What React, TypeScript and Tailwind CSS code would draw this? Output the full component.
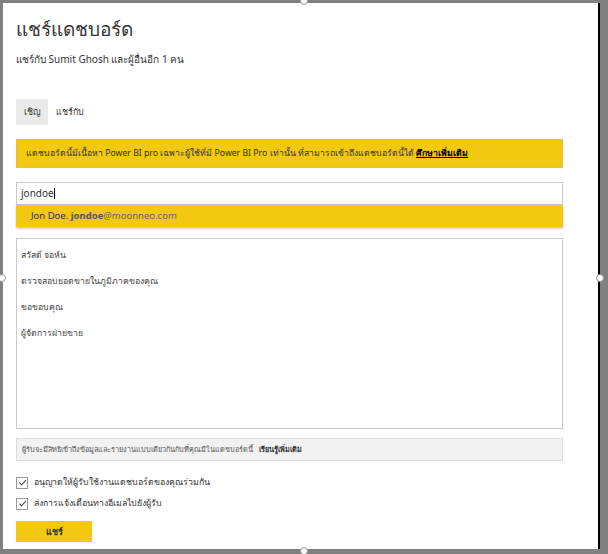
import React from "react";

export default function App() {
  const font = { fontFamily: '"Noto Sans", "DejaVu Sans", sans-serif' };
  return (
    <div className="w-[608px] h-[554px] bg-[#808080] pt-[3px] pl-[3px] relative overflow-hidden" style={font}>
      <div className="w-[597px] h-[546px] bg-white border-r-2 border-black relative">
        <div className="pl-[13px] pr-[35px] pt-[13px] flex flex-col">
          <div className="text-[19px] leading-[26px] text-[#333]">แชร์แดชบอร์ด</div>
          <div className="text-[10px] leading-[16px] text-[#333] mt-[9px]">แชร์กับ Sumit Ghosh และผู้อื่นอีก 1 คน</div>
          <div className="flex items-center mt-[32px] text-[9px] text-[#333]">
            <div className="bg-[#eaeaea] w-[32px] h-[26px] flex items-center justify-center">เชิญ</div>
            <div className="ml-[8px]">แชร์กับ</div>
          </div>
          <div className="mt-[14px] h-[29px] bg-[#f2c811] border border-[#e3c04a] flex items-center px-[9px] text-[8.7px] text-[#333]">
            แดชบอร์ดนี้มีเนื้อหา Power BI pro เฉพาะผู้ใช้ที่มี Power BI Pro เท่านั้น ที่สามารถเข้าถึงแดชบอร์ดนี้ได้&nbsp;<span className="font-bold underline text-black">ศึกษาเพิ่มเติม</span>
          </div>
          <div className="mt-[14px] h-[23px] border border-[#c8c8c8] flex items-center px-[4px] text-[10px] text-[#333]">
            jondoe<span className="inline-block w-px h-[11px] bg-black"></span>
          </div>
          <div className="h-[22px] bg-[#f2c811] shadow-[0_2px_2px_rgba(200,120,120,0.45)] flex items-center pl-[15px] text-[9.5px] text-[#333]">
            Jon Doe.&nbsp;<span className="font-bold text-[#555]">jondoe</span><span className="text-[#666]">@moonneo.com</span>
          </div>
          <div className="mt-[11px] h-[191px] border border-[#c8c8c8] pl-[4px] pt-[9px] flex flex-col gap-[12px] text-[8.7px] text-[#444] leading-[14px]">
            <div>สวัสดี จอห์น</div>
            <div>ตรวจสอบยอดขายในภูมิภาคของคุณ</div>
            <div>ขอขอบคุณ</div>
            <div>ผู้จัดการฝ่ายขาย</div>
          </div>
          <div className="mt-[9px] h-[23px] bg-[#f2f2f2] border border-[#dcdcdc] flex items-center px-[5px] text-[7.3px] text-[#555]">
            ผู้รับจะมีสิทธิเข้าถึงข้อมูลและรายงานแบบเดียวกันกับที่คุณมีในแดชบอร์ดนี้&nbsp;&nbsp;&nbsp;<span className="font-bold text-[#333]">เรียนรู้เพิ่มเติม</span>
          </div>
          <div className="mt-[15px] flex flex-col gap-[8px] text-[8.8px] text-[#333]">
            <label className="flex items-center gap-[6px]">
              <span className="w-[12px] h-[12px] border border-[#999] flex items-center justify-center bg-white">
                <svg width="9" height="9" viewBox="0 0 10 10"><path d="M1.5 5.2 L4 7.6 L8.6 2.4" fill="none" stroke="#444" strokeWidth="1.2" /></svg>
              </span>
              อนุญาตให้ผู้รับใช้งานแดชบอร์ดของคุณร่วมกัน
            </label>
            <label className="flex items-center gap-[6px]">
              <span className="w-[12px] h-[12px] border border-[#999] flex items-center justify-center bg-white">
                <svg width="9" height="9" viewBox="0 0 10 10"><path d="M1.5 5.2 L4 7.6 L8.6 2.4" fill="none" stroke="#444" strokeWidth="1.2" /></svg>
              </span>
              ส่งการแจ้งเตือนทางอีเมลไปยังผู้รับ
            </label>
          </div>
          <div className="mt-[11px] w-[76px] h-[21px] bg-[#f2c811] flex items-center justify-center text-[9px] font-bold text-[#333]">แชร์</div>
        </div>
        <div className="absolute left-[-5px] top-[271px] w-[8px] h-[8px] rounded-full border border-[#999] bg-white"></div>
        <div className="absolute right-[-6px] top-[271px] w-[8px] h-[8px] rounded-full border border-[#999] bg-white"></div>
        <div className="absolute left-[297px] top-[-6px] w-[8px] h-[8px] rounded-full border border-[#999] bg-white"></div>
        <div className="absolute left-[297px] bottom-[-6px] w-[8px] h-[8px] rounded-full border border-[#999] bg-white"></div>
      </div>
    </div>
  );
}
